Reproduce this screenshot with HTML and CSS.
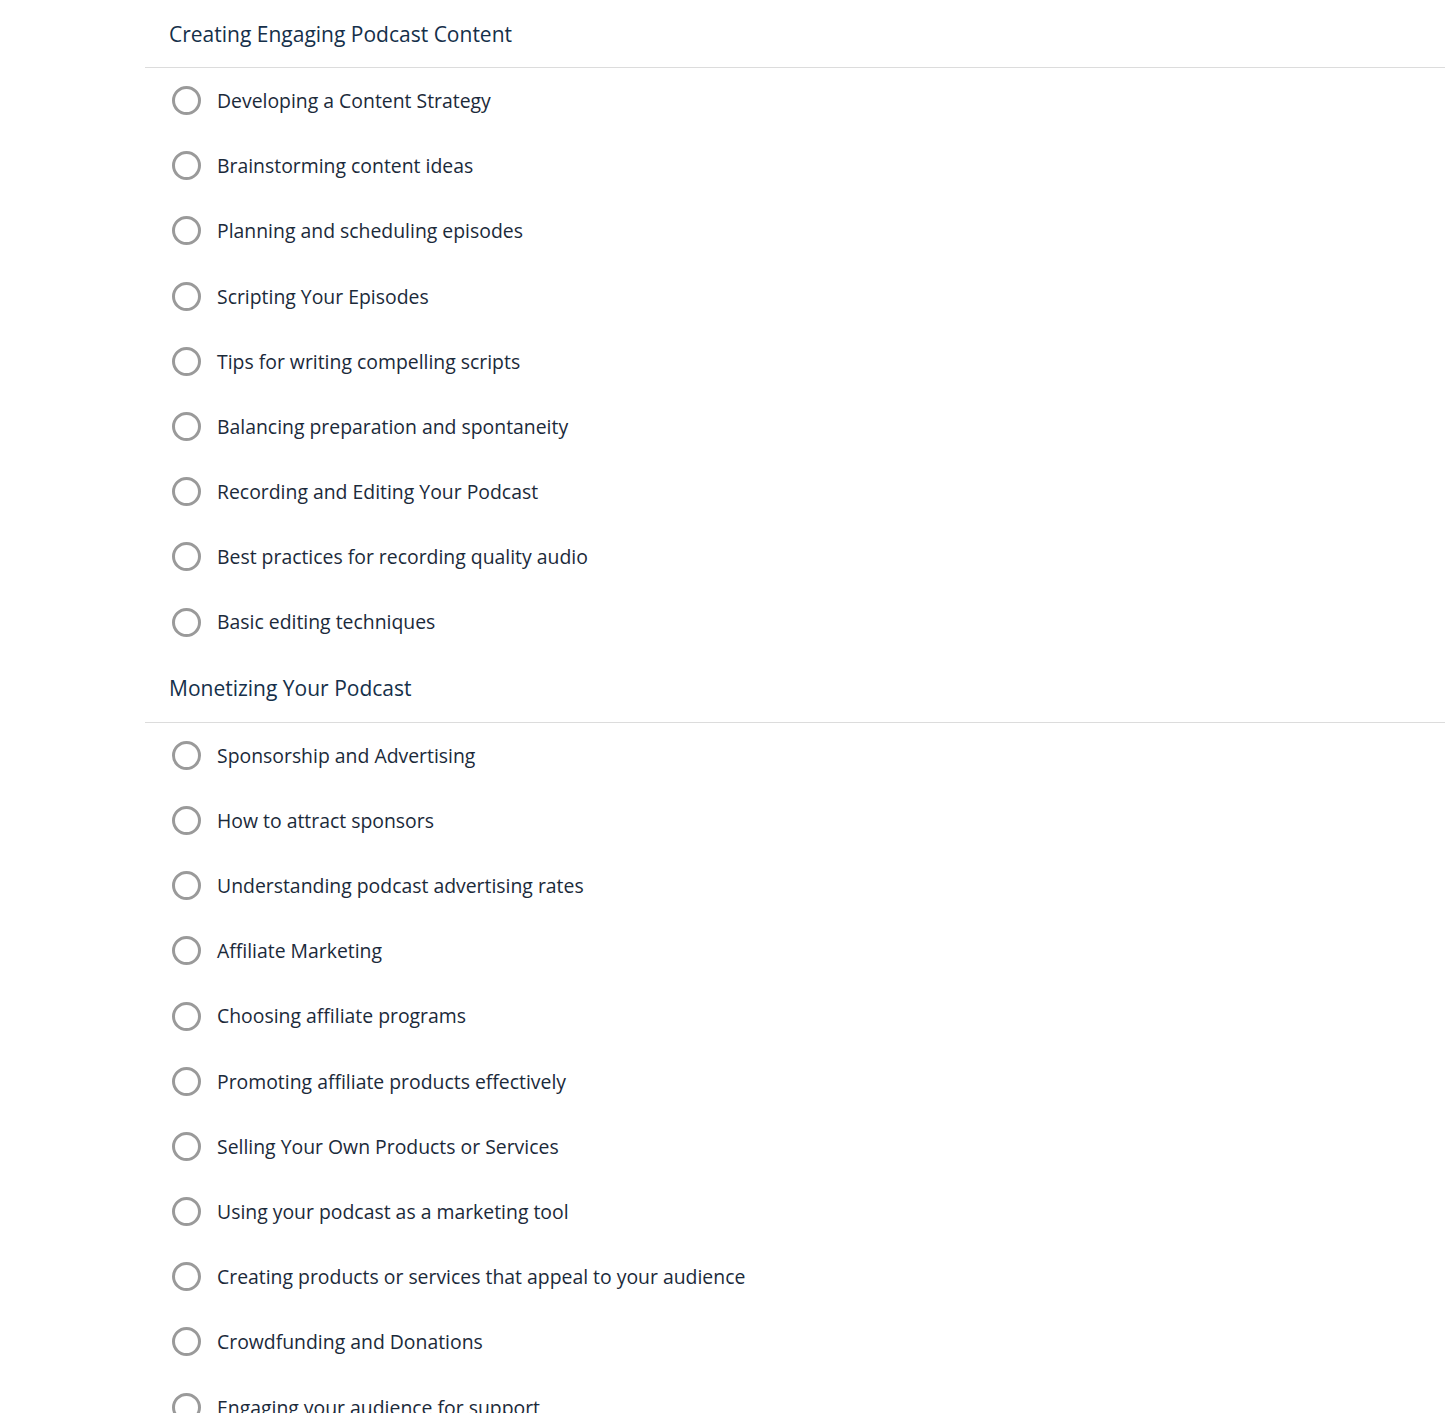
FILE: index.html
```html
<!DOCTYPE html>
<html>
<head>
<meta charset="utf-8">
<link rel="stylesheet" href="styles.css">
</head>
<body>
<div class="outline">
  <section class="section">
    <h2 class="section-title">Creating Engaging Podcast Content</h2>
    <ul class="items">
      <li class="item"><span class="radio"></span><span class="label">Developing a Content Strategy</span></li>
      <li class="item"><span class="radio"></span><span class="label">Brainstorming content ideas</span></li>
      <li class="item"><span class="radio"></span><span class="label">Planning and scheduling episodes</span></li>
      <li class="item"><span class="radio"></span><span class="label">Scripting Your Episodes</span></li>
      <li class="item"><span class="radio"></span><span class="label">Tips for writing compelling scripts</span></li>
      <li class="item"><span class="radio"></span><span class="label">Balancing preparation and spontaneity</span></li>
      <li class="item"><span class="radio"></span><span class="label">Recording and Editing Your Podcast</span></li>
      <li class="item"><span class="radio"></span><span class="label">Best practices for recording quality audio</span></li>
      <li class="item"><span class="radio"></span><span class="label">Basic editing techniques</span></li>
    </ul>
  </section>
  <section class="section">
    <h2 class="section-title">Monetizing Your Podcast</h2>
    <ul class="items">
      <li class="item"><span class="radio"></span><span class="label">Sponsorship and Advertising</span></li>
      <li class="item"><span class="radio"></span><span class="label">How to attract sponsors</span></li>
      <li class="item"><span class="radio"></span><span class="label">Understanding podcast advertising rates</span></li>
      <li class="item"><span class="radio"></span><span class="label">Affiliate Marketing</span></li>
      <li class="item"><span class="radio"></span><span class="label">Choosing affiliate programs</span></li>
      <li class="item"><span class="radio"></span><span class="label">Promoting affiliate products effectively</span></li>
      <li class="item"><span class="radio"></span><span class="label">Selling Your Own Products or Services</span></li>
      <li class="item"><span class="radio"></span><span class="label">Using your podcast as a marketing tool</span></li>
      <li class="item"><span class="radio"></span><span class="label">Creating products or services that appeal to your audience</span></li>
      <li class="item"><span class="radio"></span><span class="label">Crowdfunding and Donations</span></li>
      <li class="item"><span class="radio"></span><span class="label">Engaging your audience for support</span></li>
    </ul>
  </section>
</div>
</body>
</html>
```
FILE: styles.css
```css
html, body {
  margin: 0;
  padding: 0;
  background: #ffffff;
}
body {
  font-family: "Open Sans", Lato, sans-serif;
  color: #1b2a3a;
  overflow: hidden;
}
.outline {
  margin-left: 145px;
}
.section-title {
  margin: 0;
  height: 67px;
  box-sizing: content-box;
  display: flex;
  align-items: center;
  padding-left: 24px;
  font-size: 21px;
  font-weight: 400;
  color: #15304a;
  border-bottom: 1px solid #dcdcdc;
}
.items {
  list-style: none;
  margin: 0;
  padding: 0;
}
.item {
  height: 65.2px;
  display: flex;
  align-items: center;
  padding-left: 27px;
  gap: 16px;
  font-size: 19.4px;
}
.radio {
  width: 23px;
  height: 23px;
  border: 3px solid #9a9a9a;
  border-radius: 50%;
  flex: none;
}
.label {
  line-height: 1.2;
}
```
